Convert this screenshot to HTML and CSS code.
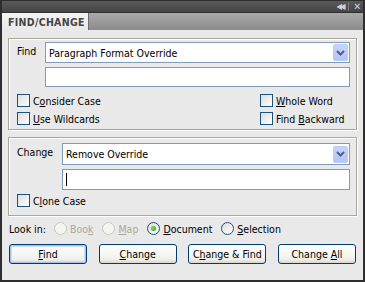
FILE: index.html
```html
<!DOCTYPE html>
<html>
    <head>
        <meta charset="utf-8">
        <link rel="stylesheet" href="styles.css">
    </head>
    <body>
        <div class='panel'>
            <div class='titlebar'>
                <span class='tb-collapse'>&#9664;&#9664;</span>
                <span class='tb-sep'></span>
                <span class='tb-close'>&#10005;</span>
            </div>
            <div class='tabs'>
                <div class='tab'>FIND/CHANGE</div>
            </div>
            <div class='content'>
                <div class='group group-find'>
                    <div class='field-row'>
                        <div class='field-label'>Find</div>
                        <div class='combo'>
                            <span class='combo-text'>Paragraph Format Override</span>
                            <span class='combo-btn'><svg width='9' height='6' viewBox='0 0 9 6'><path d='M1 1 L4.5 4.5 L8 1' fill='none' stroke='#4d6185' stroke-width='2'/></svg></span>
                        </div>
                    </div>
                    <div class='field-row'>
                        <div class='field-label'></div>
                        <div class='textbox'></div>
                    </div>
                    <div class='checks'>
                        <label class='check'><span class='box'></span><span>C<u>o</u>nsider Case</span></label>
                        <label class='check'><span class='box'></span><span><u>W</u>hole Word</span></label>
                        <label class='check'><span class='box'></span><span><u>U</u>se Wildcards</span></label>
                        <label class='check'><span class='box'></span><span>Find <u>B</u>ackward</span></label>
                    </div>
                </div>

                <div class='group group-change'>
                    <div class='field-row'>
                        <div class='field-label'>Change</div>
                        <div class='combo'>
                            <span class='combo-text'>Remove Override</span>
                            <span class='combo-btn'><svg width='9' height='6' viewBox='0 0 9 6'><path d='M1 1 L4.5 4.5 L8 1' fill='none' stroke='#4d6185' stroke-width='2'/></svg></span>
                        </div>
                    </div>
                    <div class='field-row'>
                        <div class='field-label'></div>
                        <div class='textbox'><span class='caret'></span></div>
                    </div>
                    <div class='checks'>
                        <label class='check'><span class='box'></span><span>C<u>l</u>one Case</span></label>
                    </div>
                </div>

                <div class='lookin'>
                    <span class='lookin-label'>Look in:</span>
                    <label class='radio disabled'><span class='dot'></span><span>Boo<u>k</u></span></label>
                    <label class='radio disabled'><span class='dot'></span><span><u>M</u>ap</span></label>
                    <label class='radio checked'><span class='dot'></span><span><u>D</u>ocument</span></label>
                    <label class='radio'><span class='dot'></span><span><u>S</u>election</span></label>
                </div>

                <div class='buttons'>
                    <a class='btn btn-default'><span><u>F</u>ind</span></a>
                    <a class='btn'><span><u>C</u>hange</span></a>
                    <a class='btn'><span>C<u>h</u>ange &amp; Find</span></a>
                    <a class='btn'><span>Change <u>A</u>ll</span></a>
                </div>
            </div>
        </div>
    </body>
</html>
```

FILE: styles.css
```css
html {
    box-sizing: border-box;
}
*, *:before, *:after {
    box-sizing: inherit;
}

body {
    margin: 0;
    background-color: #2b2b2b;
    font-family: "DejaVu Sans Condensed", "DejaVu Sans", sans-serif;
    font-stretch: condensed;
    font-size: 10.5px;
    color: #000;
}

.panel {
    width: 365px;
    height: 282px;
    border: 2px solid #2e2e2e;
    border-top-width: 1px;
    background-color: #e9e9e9;
    display: flex;
    flex-direction: column;
}

.titlebar {
    height: 11px;
    background: linear-gradient(#5a5a5a, #444);
    display: flex;
    align-items: center;
    justify-content: flex-end;
    padding-right: 2px;
    color: #d0d0d0;
}
.tb-collapse {
    font-size: 8px;
    line-height: 8px;
    letter-spacing: -2px;
    margin-right: 5px;
}
.tb-sep {
    width: 1px;
    height: 9px;
    background-color: #7a7a7a;
    margin-right: 4px;
}
.tb-close {
    font-size: 10px;
    font-weight: bold;
    line-height: 10px;
}

.tabs {
    height: 18px;
    border-top: 1px solid #2e2e2e;
    background: linear-gradient(#a9a9a9, #8b8b8b);
    display: flex;
}
.tab {
    width: 87px;
    background: linear-gradient(#f4f4f4, #e9e9e9);
    border-right: 1px solid #6f6f6f;
    color: #444;
    font-weight: bold;
    font-size: 10.5px;
    letter-spacing: 0.3px;
    padding: 3px 0 0 6px;
}

.content {
    flex: 1;
    padding: 8px 6px 0 6px;
}

.group {
    border: 1px solid #aca899;
    box-shadow: inset 1px 1px #fff, 1px 1px #fff;
    padding: 3px 6px 4px 8px;
}
.group-change {
    margin-top: 7px;
    padding-top: 5px;
    padding-bottom: 8px;
}

.field-row {
    display: flex;
    margin-bottom: 4px;
}
.field-label {
    width: 28px;
    flex-shrink: 0;
    padding-top: 3px;
}
.group-change .field-label {
    width: 45px;
}

.combo {
    flex: 1;
    height: 21px;
    background-color: #fff;
    border: 1px solid #7f9db9;
    display: flex;
    align-items: center;
    padding: 0 1px 0 3px;
}
.group-change .combo {
    height: 22px;
}
.combo-text {
    flex: 1;
}
.combo-btn {
    width: 15px;
    height: 17px;
    background: linear-gradient(#c6d4fc, #b4c6f6);
    border: 1px solid #bccbf3;
    border-radius: 2px;
    display: flex;
    align-items: center;
    justify-content: center;
}

.textbox {
    flex: 1;
    height: 20px;
    background-color: #fff;
    border: 1px solid #7f9db9;
    padding: 3px 0 0 3px;
}
.group-change .textbox {
    height: 21px;
}
.caret {
    display: block;
    width: 1px;
    height: 13px;
    background-color: #000;
}

.checks {
    display: grid;
    grid-template-columns: 1fr 90px;
    row-gap: 5px;
    margin-top: 7px;
}
.group-change .checks {
    margin-top: 3px;
}
.check {
    display: flex;
    align-items: center;
    height: 13px;
}
.box {
    width: 13px;
    height: 13px;
    border: 1px solid #1c5180;
    background: linear-gradient(135deg, #dcdcd7, #fff);
    margin-right: 3px;
}

.lookin {
    display: flex;
    align-items: center;
    height: 13px;
    margin-top: 6px;
    padding-left: 1px;
}
.lookin-label {
    margin-right: 8px;
}
.radio {
    display: flex;
    align-items: center;
    margin-right: 9px;
}
.dot {
    width: 13px;
    height: 13px;
    border-radius: 50%;
    border: 1px solid #1c5180;
    background: linear-gradient(135deg, #dcdcd7, #fff);
    margin-right: 3px;
    display: flex;
    align-items: center;
    justify-content: center;
}
.radio.disabled {
    color: #aca899;
}
.radio.disabled .dot {
    border-color: #cac8bb;
    background: #f4f4f0;
}
.radio.checked .dot:after {
    content: '';
    width: 5px;
    height: 5px;
    border-radius: 50%;
    background: radial-gradient(circle at 40% 40%, #6fdb6f, #21a121);
}

.buttons {
    display: flex;
    justify-content: space-between;
    margin-top: 9px;
    padding: 0 1px 0 1px;
}
.btn {
    width: 78px;
    height: 20px;
    border: 1px solid #003c74;
    border-radius: 3px;
    background: linear-gradient(#fff, #f0f0ea 80%, #d8d6cd);
    display: flex;
    align-items: center;
    justify-content: center;
    color: #000;
    text-decoration: none;
}
.btn-default {
    box-shadow: inset 0 0 0 1px #a7c1ee, inset 0 0 0 2px #cfdcf5;
}
```
